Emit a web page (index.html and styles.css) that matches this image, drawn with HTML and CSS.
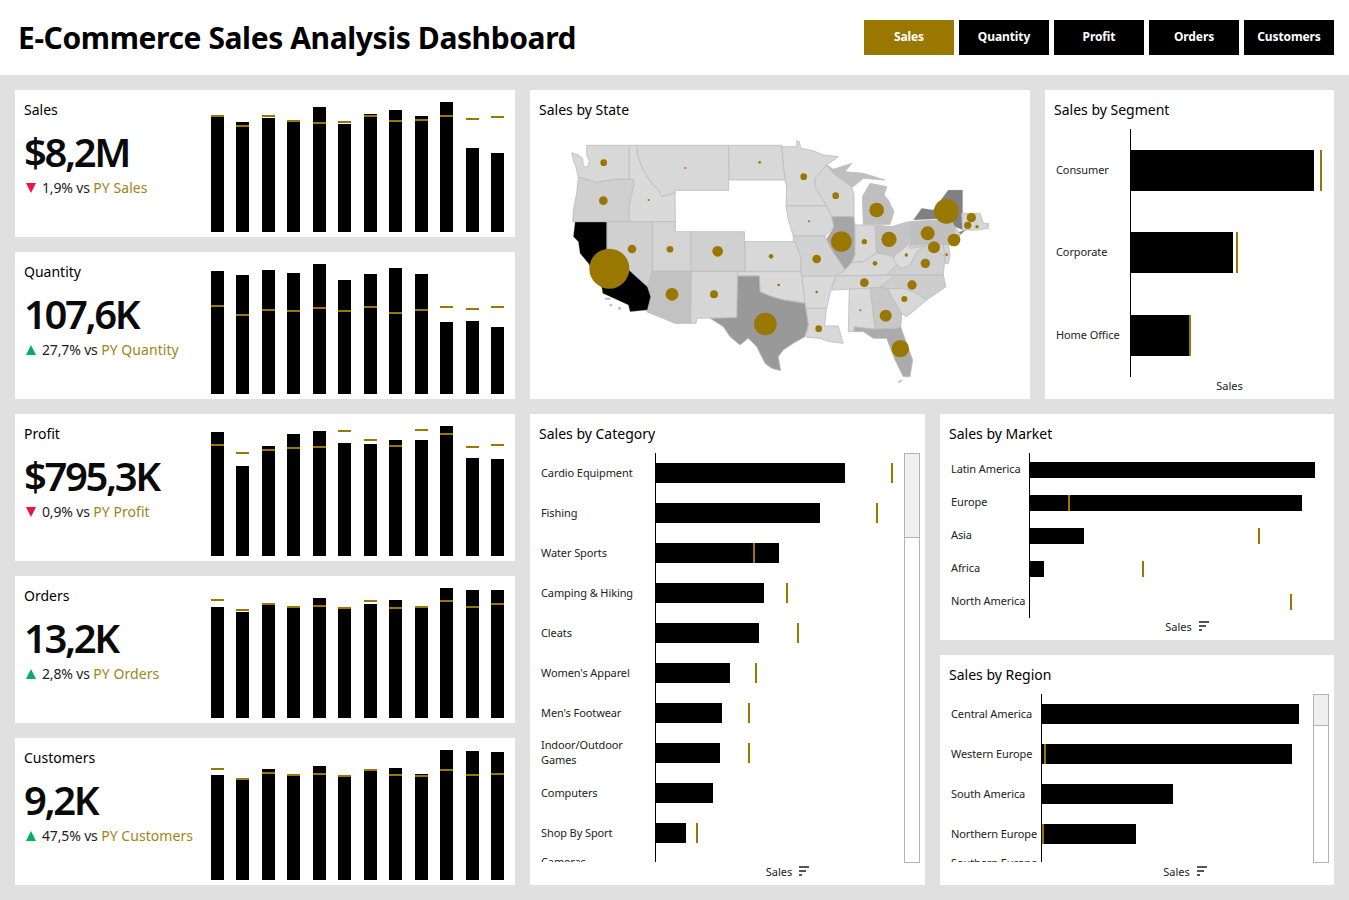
FILE: index.html
```html
<!DOCTYPE html>
<html lang="en">
<head>
<meta charset="utf-8">
<title>E-Commerce Sales Analysis Dashboard</title>
<link rel="stylesheet" href="styles.css">
</head>
<body>
<header class="top">
  <h1 class="brand">E-Commerce Sales Analysis Dashboard</h1>
  <nav class="tabs">
    <a class="tab tab-on">Sales</a><a class="tab">Quantity</a><a class="tab">Profit</a><a class="tab">Orders</a><a class="tab">Customers</a>
  </nav>
</header>
<main class="board">
  <section class="kpis">
    <article class="kpi">
      <div class="kpi-text">
        <h2 class="title">Sales</h2>
        <div class="value">$8,2M</div>
        <p class="delta"><svg class="tri" viewBox="0 0 10 10"><path class="down" d="M0 0H10L5 10Z"/></svg>1,9% vs <span class="py">PY Sales</span></p>
      </div>
      <div class="cols">
        <span class="col" style="height:115px"><i class="tick" style="bottom:115px"></i></span>
        <span class="col" style="height:110px"><i class="tick" style="bottom:105px"></i></span>
        <span class="col" style="height:114px"><i class="tick" style="bottom:115px"></i></span>
        <span class="col" style="height:110px"><i class="tick" style="bottom:110px"></i></span>
        <span class="col" style="height:125px"><i class="tick" style="bottom:108px"></i></span>
        <span class="col" style="height:108px"><i class="tick" style="bottom:109px"></i></span>
        <span class="col" style="height:118px"><i class="tick" style="bottom:115px"></i></span>
        <span class="col" style="height:122px"><i class="tick" style="bottom:110px"></i></span>
        <span class="col" style="height:116px"><i class="tick" style="bottom:111px"></i></span>
        <span class="col" style="height:130px"><i class="tick" style="bottom:115px"></i></span>
        <span class="col" style="height:84px"><i class="tick" style="bottom:112px"></i></span>
        <span class="col" style="height:79px"><i class="tick" style="bottom:114px"></i></span>
      </div>
    </article>
    <article class="kpi">
      <div class="kpi-text">
        <h2 class="title">Quantity</h2>
        <div class="value">107,6K</div>
        <p class="delta"><svg class="tri" viewBox="0 0 10 10"><path class="up" d="M0 10H10L5 0Z"/></svg>27,7% vs <span class="py">PY Quantity</span></p>
      </div>
      <div class="cols">
        <span class="col" style="height:123px"><i class="tick" style="bottom:87px"></i></span>
        <span class="col" style="height:119px"><i class="tick" style="bottom:78px"></i></span>
        <span class="col" style="height:124px"><i class="tick" style="bottom:83px"></i></span>
        <span class="col" style="height:121px"><i class="tick" style="bottom:82px"></i></span>
        <span class="col" style="height:130px"><i class="tick" style="bottom:85px"></i></span>
        <span class="col" style="height:114px"><i class="tick" style="bottom:82px"></i></span>
        <span class="col" style="height:120px"><i class="tick" style="bottom:86px"></i></span>
        <span class="col" style="height:126px"><i class="tick" style="bottom:80px"></i></span>
        <span class="col" style="height:120px"><i class="tick" style="bottom:83px"></i></span>
        <span class="col" style="height:72px"><i class="tick" style="bottom:86px"></i></span>
        <span class="col" style="height:73px"><i class="tick" style="bottom:84px"></i></span>
        <span class="col" style="height:67px"><i class="tick" style="bottom:86px"></i></span>
      </div>
    </article>
    <article class="kpi">
      <div class="kpi-text">
        <h2 class="title">Profit</h2>
        <div class="value">$795,3K</div>
        <p class="delta"><svg class="tri" viewBox="0 0 10 10"><path class="down" d="M0 0H10L5 10Z"/></svg>0,9% vs <span class="py">PY Profit</span></p>
      </div>
      <div class="cols">
        <span class="col" style="height:124px"><i class="tick" style="bottom:110px"></i></span>
        <span class="col" style="height:90px"><i class="tick" style="bottom:102px"></i></span>
        <span class="col" style="height:110px"><i class="tick" style="bottom:105px"></i></span>
        <span class="col" style="height:122px"><i class="tick" style="bottom:107px"></i></span>
        <span class="col" style="height:125px"><i class="tick" style="bottom:108px"></i></span>
        <span class="col" style="height:113px"><i class="tick" style="bottom:124px"></i></span>
        <span class="col" style="height:112px"><i class="tick" style="bottom:115px"></i></span>
        <span class="col" style="height:116px"><i class="tick" style="bottom:109px"></i></span>
        <span class="col" style="height:116px"><i class="tick" style="bottom:125px"></i></span>
        <span class="col" style="height:130px"><i class="tick" style="bottom:121px"></i></span>
        <span class="col" style="height:98px"><i class="tick" style="bottom:108px"></i></span>
        <span class="col" style="height:97px"><i class="tick" style="bottom:110px"></i></span>
      </div>
    </article>
    <article class="kpi">
      <div class="kpi-text">
        <h2 class="title">Orders</h2>
        <div class="value">13,2K</div>
        <p class="delta"><svg class="tri" viewBox="0 0 10 10"><path class="up" d="M0 10H10L5 0Z"/></svg>2,8% vs <span class="py">PY Orders</span></p>
      </div>
      <div class="cols">
        <span class="col" style="height:111px"><i class="tick" style="bottom:117px"></i></span>
        <span class="col" style="height:106px"><i class="tick" style="bottom:107px"></i></span>
        <span class="col" style="height:113px"><i class="tick" style="bottom:113px"></i></span>
        <span class="col" style="height:110px"><i class="tick" style="bottom:110px"></i></span>
        <span class="col" style="height:120px"><i class="tick" style="bottom:111px"></i></span>
        <span class="col" style="height:109px"><i class="tick" style="bottom:109px"></i></span>
        <span class="col" style="height:114px"><i class="tick" style="bottom:116px"></i></span>
        <span class="col" style="height:118px"><i class="tick" style="bottom:109px"></i></span>
        <span class="col" style="height:110px"><i class="tick" style="bottom:110px"></i></span>
        <span class="col" style="height:130px"><i class="tick" style="bottom:116px"></i></span>
        <span class="col" style="height:128px"><i class="tick" style="bottom:110px"></i></span>
        <span class="col" style="height:128px"><i class="tick" style="bottom:113px"></i></span>
      </div>
    </article>
    <article class="kpi">
      <div class="kpi-text">
        <h2 class="title">Customers</h2>
        <div class="value">9,2K</div>
        <p class="delta"><svg class="tri" viewBox="0 0 10 10"><path class="up" d="M0 10H10L5 0Z"/></svg>47,5% vs <span class="py">PY Customers</span></p>
      </div>
      <div class="cols">
        <span class="col" style="height:105px"><i class="tick" style="bottom:110px"></i></span>
        <span class="col" style="height:100px"><i class="tick" style="bottom:100px"></i></span>
        <span class="col" style="height:111px"><i class="tick" style="bottom:106px"></i></span>
        <span class="col" style="height:104px"><i class="tick" style="bottom:104px"></i></span>
        <span class="col" style="height:114px"><i class="tick" style="bottom:105px"></i></span>
        <span class="col" style="height:103px"><i class="tick" style="bottom:103px"></i></span>
        <span class="col" style="height:109px"><i class="tick" style="bottom:109px"></i></span>
        <span class="col" style="height:112px"><i class="tick" style="bottom:104px"></i></span>
        <span class="col" style="height:106px"><i class="tick" style="bottom:103px"></i></span>
        <span class="col" style="height:130px"><i class="tick" style="bottom:109px"></i></span>
        <span class="col" style="height:129px"><i class="tick" style="bottom:104px"></i></span>
        <span class="col" style="height:128px"><i class="tick" style="bottom:105px"></i></span>
      </div>
    </article>
  </section>

  <section class="detail">
    <div class="detail-top">
      <article class="panel panel-map">
        <h2 class="title">Sales by State</h2>
        <svg class="map" viewBox="0 117 1500 813" aria-label="Map of sales by US state">
          <g class="states">
            <path fill="#d8d8d8" d="M170 166L298 166L298 268L262 268L228 272L200 278L172 268L145 262L138 232L130 210L125 188L145 195L158 205L160 228L172 232L178 215L170 195Z"/>
            <path fill="#d0d0d0" d="M145 262L172 268L200 278L228 272L262 268L310 268L312 285L300 320L298 345L298 395L128 395L130 360L140 310Z"/>
            <path fill="#dadada" d="M298 166L322 166L322 195L340 240L365 280L385 300L395 320L435 308L436 395L298 395L298 345L312 285L310 268L298 268Z"/>
            <path fill="#d8d8d8" d="M322 166L596 166L596 301L436 301L436 308L395 320L385 300L365 280L340 240L322 195Z"/>
            <path fill="#d8d8d8" d="M596 166L755 166L760 220L765 270L598 270Z"/>
            <path fill="#d8d8d8" d="M755 170L800 170L800 152L808 155L812 175L850 182L880 195L925 200L890 225L855 265L855 290L890 348L768 348L770 290L765 270L760 220Z"/>
            <path fill="#d6d6d6" d="M855 265L890 225L910 250L965 290L972 315L972 380L905 380L890 348L855 290Z"/>
            <path fill="#bfbfbf" d="M890 225L910 238L965 220L945 245L1000 250L1065 270L1000 265L970 290L965 290L910 250Z"/>
            <path fill="#bfbfbf" d="M1000 403L997 320L1020 280L1070 290L1062 315L1075 330L1092 365L1080 403Z"/>
            <path fill="#d8d8d8" d="M768 348L890 348L905 380L912 410L885 438L790 438L775 390Z"/>
            <path fill="#a6a6a6" d="M905 380L972 380L975 410L975 495L965 518L945 540L925 510L905 480L885 455L912 410Z"/>
            <path fill="#d8d8d8" d="M975 405L1035 405L1040 488L1000 515L965 518L975 495Z"/>
            <path fill="#c4c4c4" d="M1035 405L1085 410L1135 395L1137 460L1110 485L1090 500L1040 488Z"/>
            <path fill="#d8d8d8" d="M945 540L965 518L1000 515L1040 488L1090 500L1100 525L1070 555L918 558Z"/>
            <path fill="#d0d0d0" d="M1070 555L1100 525L1115 535L1140 525L1160 485L1180 468L1210 470L1230 490L1245 500L1240 555Z"/>
            <path fill="#dcdcdc" d="M1137 460L1140 475L1180 468L1160 485L1140 525L1115 535L1090 510L1095 495L1110 485Z"/>
            <path fill="#d6d6d6" d="M918 558L1095 556L1050 592L1020 594L958 598L905 600Z"/>
            <path fill="#cdcdcd" d="M1095 556L1240 556L1248 590L1190 630L1160 610L1120 595L1072 596L1050 592Z"/>
            <path fill="#d8d8d8" d="M1072 596L1120 595L1160 610L1190 630L1130 680L1115 672Z"/>
            <path fill="#c8c8c8" d="M1020 594L1050 592L1072 596L1115 672L1112 715L1035 717Z"/>
            <path fill="#ababab" d="M972 710L1035 717L1100 715L1112 710L1130 760L1148 810L1140 860L1120 860L1095 810L1070 745L1030 745L1000 725L972 725Z"/>
            <path fill="#dadada" d="M958 598L1020 594L1035 717L972 710L972 725L955 725Z"/>
            <path fill="#d8d8d8" d="M828 655L890 655L883 708L925 708L935 745L940 760L900 755L870 745L830 742L835 705Z"/>
            <path fill="#dadada" d="M815 558L918 558L905 590L890 655L828 655L825 638Z"/>
            <path fill="#d2d2d2" d="M790 438L885 438L905 480L925 510L945 540L918 558L815 558L812 500L790 460Z"/>
            <path fill="#d8d8d8" d="M645 455L795 455L812 500L812 544L645 544Z"/>
            <path fill="#dadada" d="M622 545L812 545L815 558L825 638L780 632L740 625L690 605L688 558L622 558Z"/>
            <path fill="#999999" d="M622 558L688 558L690 605L720 618L760 630L825 640L835 705L825 740L790 760L760 780L745 800L752 842L725 835L705 820L680 770L655 745L630 765L600 740L580 710L540 685L620 682Z"/>
            <path fill="#d6d6d6" d="M483 544L622 544L620 682L500 685L498 700L482 700Z"/>
            <path fill="#c2c2c2" d="M366 543L483 543L482 700L435 700L350 665L362 620L352 590Z"/>
            <path fill="#d0d0d0" d="M482 425L643 425L645 544L482 544Z"/>
            <path fill="#d4d4d4" d="M367 395L436 395L436 425L482 425L482 543L367 543Z"/>
            <path fill="#d0d0d0" d="M232 395L367 395L367 543L352 590L232 480Z"/>
            <path fill="#000000" stroke="#000000" d="M135 396L230 396L230 480L352 590L362 620L352 660L300 665L295 645L218 610L215 590L175 520L150 490L145 455L130 440Z"/>
            <path fill="#c0c0c0" d="M1137 395L1260 388L1275 410L1270 450L1255 465L1140 465Z"/>
            <path fill="#808080" stroke="#808080" d="M1255 300L1298 300L1298 420L1275 410L1260 385L1150 390L1175 355L1210 360Z"/>
            <path fill="#808080" stroke="#808080" d="M1272 432L1310 418L1290 435Z"/>
            <path fill="#cfcfcf" d="M1275 410L1290 432L1280 465L1258 465L1270 450Z"/>
            <path fill="#d4d4d4" d="M1140 465L1240 463L1245 500L1230 490L1210 470L1180 468L1140 475Z"/>
            <path fill="#d4d4d4" d="M1240 463L1255 463L1260 495L1255 520L1245 520L1245 495Z"/>
            <path fill="#d6d6d6" d="M1295 370L1350 370L1360 400L1375 400L1375 415L1340 420L1298 420Z"/>
            <path fill="#bdbdbd" d="M225 625H240V628H225ZM240 643H245V648H240ZM266 652H271V658H266ZM1105 875L1115 870L1115 873L1106 878Z"/>
          </g>
          <g class="dots">
            <circle cx="221" cy="218" r="10"/><circle cx="220" cy="332" r="13"/><circle cx="466" cy="234" r="3"/><circle cx="689" cy="217" r="4"/><circle cx="821" cy="260" r="10"/><circle cx="917" cy="317" r="10"/><circle cx="1040" cy="360" r="22"/><circle cx="356" cy="330" r="3"/><circle cx="837" cy="394" r="3"/><circle cx="934" cy="455" r="31"/><circle cx="1003" cy="455" r="8"/><circle cx="1077" cy="448" r="23"/><circle cx="1193" cy="430" r="21"/><circle cx="1249" cy="364" r="37"/><circle cx="1324" cy="383" r="14"/><circle cx="1313" cy="406" r="11"/><circle cx="1341" cy="410" r="5"/><circle cx="1272" cy="450" r="19"/><circle cx="1212" cy="472" r="18"/><circle cx="1250" cy="494" r="4"/><circle cx="1129" cy="495" r="5"/><circle cx="1186" cy="520" r="14"/><circle cx="1035" cy="520" r="7"/><circle cx="1146" cy="585" r="14"/><circle cx="1003" cy="578" r="13"/><circle cx="1123" cy="627" r="9"/><circle cx="1067" cy="677" r="18"/><circle cx="991" cy="661" r="3"/><circle cx="1111" cy="776" r="26"/><circle cx="866" cy="716" r="10"/><circle cx="706" cy="702" r="34"/><circle cx="860" cy="606" r="4"/><circle cx="746" cy="585" r="4"/><circle cx="723" cy="499" r="7"/><circle cx="860" cy="507" r="13"/><circle cx="552" cy="613" r="12"/><circle cx="426" cy="613" r="19"/><circle cx="563" cy="484" r="16"/><circle cx="420" cy="478" r="10"/><circle cx="306" cy="477" r="13"/><circle cx="238" cy="536" r="60"/>
          </g>
        </svg>
      </article>

      <article class="panel panel-segment">
        <h2 class="title">Sales by Segment</h2>
        <div class="plot">
          <div class="row"><span class="label">Consumer</span><div class="track"><i class="bar" style="width:183px"></i><i class="target" style="left:189px"></i></div></div>
          <div class="row"><span class="label">Corporate</span><div class="track"><i class="bar" style="width:102px"></i><i class="target" style="left:105px"></i></div></div>
          <div class="row"><span class="label">Home Office</span><div class="track"><i class="bar" style="width:58px"></i><i class="target" style="left:58px"></i></div></div>
        </div>
        <div class="axis-title">Sales</div>
      </article>
    </div>

    <div class="detail-bottom">
      <article class="panel panel-category">
        <h2 class="title">Sales by Category</h2>
        <div class="plot">
          <div class="row"><span class="label">Cardio Equipment</span><div class="track"><i class="bar" style="width:189px"></i><i class="target" style="left:235px"></i></div></div>
          <div class="row"><span class="label">Fishing</span><div class="track"><i class="bar" style="width:164px"></i><i class="target" style="left:220px"></i></div></div>
          <div class="row"><span class="label">Water Sports</span><div class="track"><i class="bar" style="width:123px"></i><i class="target" style="left:97px"></i></div></div>
          <div class="row"><span class="label">Camping &amp; Hiking</span><div class="track"><i class="bar" style="width:108px"></i><i class="target" style="left:130px"></i></div></div>
          <div class="row"><span class="label">Cleats</span><div class="track"><i class="bar" style="width:103px"></i><i class="target" style="left:141px"></i></div></div>
          <div class="row"><span class="label">Women's Apparel</span><div class="track"><i class="bar" style="width:74px"></i><i class="target" style="left:99px"></i></div></div>
          <div class="row"><span class="label">Men's Footwear</span><div class="track"><i class="bar" style="width:66px"></i><i class="target" style="left:92px"></i></div></div>
          <div class="row"><span class="label">Indoor/Outdoor Games</span><div class="track"><i class="bar" style="width:64px"></i><i class="target" style="left:92px"></i></div></div>
          <div class="row"><span class="label">Computers</span><div class="track"><i class="bar" style="width:57px"></i></div></div>
          <div class="row"><span class="label">Shop By Sport</span><div class="track"><i class="bar" style="width:30px"></i><i class="target" style="left:40px"></i></div></div>
          <div class="row row-cut"><span class="label">Cameras</span><div class="track"></div></div>
        </div>
        <div class="scroll"><div class="thumb"></div></div>
        <div class="axis-title">Sales<svg class="sort" viewBox="0 0 10 10"><path d="M0 0H10V2H0ZM0 4H7V6H0ZM0 8H3V10H0Z"/></svg></div>
      </article>

      <div class="stack">
        <article class="panel panel-market">
          <h2 class="title">Sales by Market</h2>
          <div class="plot">
            <div class="row"><span class="label">Latin America</span><div class="track"><i class="bar" style="width:285px"></i></div></div>
            <div class="row"><span class="label">Europe</span><div class="track"><i class="bar" style="width:272px"></i><i class="target" style="left:38px"></i></div></div>
            <div class="row"><span class="label">Asia</span><div class="track"><i class="bar" style="width:54px"></i><i class="target" style="left:228px"></i></div></div>
            <div class="row"><span class="label">Africa</span><div class="track"><i class="bar" style="width:14px"></i><i class="target" style="left:112px"></i></div></div>
            <div class="row"><span class="label">North America</span><div class="track"><i class="target" style="left:260px"></i></div></div>
          </div>
          <div class="axis-title">Sales<svg class="sort" viewBox="0 0 10 10"><path d="M0 0H10V2H0ZM0 4H7V6H0ZM0 8H3V10H0Z"/></svg></div>
        </article>
        <article class="panel panel-region">
          <h2 class="title">Sales by Region</h2>
          <div class="plot">
            <div class="row"><span class="label">Central America</span><div class="track"><i class="bar" style="width:257px"></i></div></div>
            <div class="row"><span class="label">Western Europe</span><div class="track"><i class="bar" style="width:250px"></i><i class="target" style="left:2px"></i></div></div>
            <div class="row"><span class="label">South America</span><div class="track"><i class="bar" style="width:131px"></i></div></div>
            <div class="row"><span class="label">Northern Europe</span><div class="track"><i class="bar" style="width:94px"></i><i class="target" style="left:0"></i></div></div>
            <div class="row row-cut"><span class="label">Southern Europe</span><div class="track"></div></div>
          </div>
          <div class="scroll"><div class="thumb"></div></div>
          <div class="axis-title">Sales<svg class="sort" viewBox="0 0 10 10"><path d="M0 0H10V2H0ZM0 4H7V6H0ZM0 8H3V10H0Z"/></svg></div>
        </article>
      </div>
    </div>
  </section>
</main>
</body>
</html>
```

FILE: styles.css
```css
* { box-sizing: border-box; }
html, body { margin: 0; padding: 0; }
body {
  width: 1349px;
  height: 900px;
  overflow: hidden;
  background: #e0e0e0;
  color: #000;
  font-family: "Noto Sans", "Open Sans", sans-serif;
}
h1, h2, p { margin: 0; }

.top {
  height: 75px;
  background: #fff;
  display: flex;
  align-items: center;
  justify-content: space-between;
  padding: 0 15px 0 18px;
}
.brand {
  font-size: 30px;
  font-weight: 700;
  line-height: 36px;
  letter-spacing: -0.4px;
  white-space: nowrap;
}
.tabs { display: flex; gap: 5px; }
.tab {
  width: 90px;
  height: 35px;
  padding-bottom: 2px;
  background: #000;
  color: #fff;
  display: flex;
  align-items: center;
  justify-content: center;
  font-size: 12px;
  font-weight: 700;
  letter-spacing: -0.1px;
}
.tab-on { background: #997700; }

.board {
  display: flex;
  gap: 15px;
  padding: 15px;
}
.kpis {
  width: 500px;
  display: flex;
  flex-direction: column;
  gap: 15px;
}
.kpi {
  height: 147px;
  background: #fff;
  display: flex;
  justify-content: space-between;
  padding: 10px 11px 5px 9px;
}
.title {
  font-size: 14px;
  font-weight: 400;
  line-height: 20px;
}
.value {
  font-size: 40px;
  font-weight: 600;
  line-height: 46px;
  letter-spacing: -2.4px;
  margin-top: 9px;
  color: #0a0a0a;
}
.delta {
  display: flex;
  align-items: center;
  font-size: 14px;
  line-height: 20px;
  letter-spacing: -0.15px;
  margin-top: 3px;
  color: #222;
  white-space: pre;
}
.tri { width: 10px; height: 10px; margin: 0 6px 0 2px; flex: none; }
.down { fill: #f0133f; }
.up { fill: #00b060; }
.py { color: #a08414; letter-spacing: 0.05px; }

.cols {
  width: 293px;
  height: 130px;
  align-self: flex-end;
  display: flex;
  align-items: flex-end;
  justify-content: space-between;
}
.col {
  position: relative;
  width: 13px;
  background: #000;
}
.tick {
  position: absolute;
  left: 0;
  width: 13px;
  height: 2px;
  background: #997700;
}

.detail {
  width: 804px;
  display: flex;
  flex-direction: column;
  gap: 15px;
}
.detail-top {
  height: 309px;
  display: flex;
  gap: 15px;
}
.detail-bottom {
  height: 471px;
  display: flex;
  gap: 15px;
}
.stack {
  width: 394px;
  display: flex;
  flex-direction: column;
  gap: 15px;
}
.panel {
  position: relative;
  background: #fff;
  padding-top: 10px;
}
.panel > .title { padding-left: 9px; }
.panel-map { width: 500px; }
.panel-segment { width: 289px; --label: 74px; --row: 82.67px; --bar: 41px; --axis-pad: 80px; --axis-h: 18px; }
.panel-category { width: 395px; --label: 114px; --row: 40px; --bar: 20px; --axis-pad: 120px; --axis-h: 18px; }
.panel-market { height: 226px; --label: 78px; --row: 33px; --bar: 16px; --axis-pad: 100px; --axis-h: 16px; }
.panel-region { height: 230px; --label: 90px; --row: 40px; --bar: 20px; --axis-pad: 96px; --axis-h: 18px; }

.map {
  display: block;
  width: 500px;
  height: 271px;
  margin-top: 9px;
}
.states path { stroke: #bdbdbd; stroke-width: 2.5; stroke-linejoin: round; }
.states path[stroke] { stroke-width: 1; }
.dots circle { fill: #997700; }

.plot {
  margin-top: 9px;
  padding-left: 11px;
  overflow: hidden;
}
.panel-category .plot { height: 409px; }
.panel-region .plot { height: 168px; }
.row {
  display: grid;
  grid-template-columns: var(--label) 1fr;
  height: var(--row);
}
.row-cut { height: 18px; }
.label {
  align-self: center;
  margin-bottom: 2px;
  font-size: 11px;
  line-height: 15px;
  letter-spacing: -0.1px;
  color: #222;
}
.track {
  position: relative;
  border-left: 1px solid #000;
  display: flex;
  align-items: center;
}
.bar {
  display: block;
  height: var(--bar);
  background: #000;
}
.target {
  position: absolute;
  top: 50%;
  width: 2px;
  height: var(--bar);
  margin-top: calc(var(--bar) / -2);
  background: #997700;
}
.scroll {
  position: absolute;
  top: 39px;
  bottom: 22px;
  width: 16px;
  border: 1px solid #b3b3b3;
}
.panel-category .scroll { left: 374px; }
.panel-region .scroll { left: 373px; }
.thumb {
  background: #efefef;
  border-bottom: 1px solid #b3b3b3;
}
.panel-category .thumb { height: 84px; }
.panel-region .thumb { height: 31px; }
.axis-title {
  display: flex;
  align-items: center;
  justify-content: center;
  gap: 7px;
  height: var(--axis-h);
  padding-left: var(--axis-pad);
  font-size: 11px;
  color: #222;
}
.sort { width: 10px; height: 10px; fill: #555; }
```
